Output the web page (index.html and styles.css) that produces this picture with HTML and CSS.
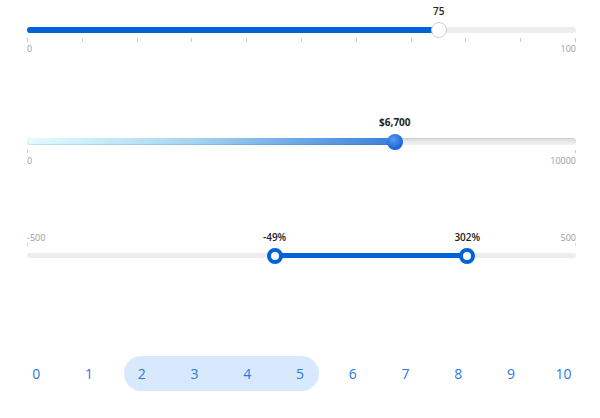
FILE: index.html
```html
<!DOCTYPE html>
<html lang="en">
<head>
    <meta charset="UTF-8">
    <meta name="viewport" content="width=device-width, initial-scale=1.0">
    <title>Sliders</title>
    <link rel="stylesheet" href="styles.css">
</head>
<body>
    <!-- Basic slider with ticks -->
    <div class="slider slider-basic">
        <div class="rail">
            <div class="fill" style="width: 75%"></div>
            <span class="bubble" style="left: 75%">75</span>
            <div class="thumb" style="left: 75%"></div>
        </div>
        <div class="ticks">
            <i></i><i></i><i></i><i></i><i></i><i></i><i></i><i></i><i></i><i></i><i></i>
        </div>
        <div class="tick-labels">
            <span>0</span>
            <span>100</span>
        </div>
    </div>

    <!-- Gradient slider -->
    <div class="slider slider-gradient">
        <div class="rail">
            <div class="fill" style="width: 67%"></div>
            <span class="bubble" style="left: 67%">$6,700</span>
            <div class="thumb" style="left: 67%"></div>
        </div>
        <div class="ticks">
            <i></i><i></i>
        </div>
        <div class="tick-labels">
            <span>0</span>
            <span>10000</span>
        </div>
    </div>

    <!-- Range slider -->
    <div class="slider slider-range">
        <div class="tick-labels">
            <span>-500</span>
            <span>500</span>
        </div>
        <div class="ticks">
            <i></i><i></i>
        </div>
        <div class="rail">
            <div class="fill" style="left: 45.1%; width: 35.1%"></div>
            <span class="bubble" style="left: 45.1%">-49%</span>
            <span class="bubble" style="left: 80.2%">302%</span>
            <div class="thumb" style="left: 45.1%"></div>
            <div class="thumb" style="left: 80.2%"></div>
        </div>
    </div>

    <!-- Step range picker -->
    <div class="steps">
        <div class="steps-track">
            <div class="steps-selected"></div>
        </div>
        <div class="steps-labels">
            <span>0</span>
            <span>1</span>
            <span>2</span>
            <span>3</span>
            <span>4</span>
            <span>5</span>
            <span>6</span>
            <span>7</span>
            <span>8</span>
            <span>9</span>
            <span>10</span>
        </div>
    </div>
</body>
</html>
```

FILE: styles.css
```css
body {
  margin: 0;
  font-family: "Open Sans", "Noto Sans", sans-serif;
  background-color: white;
}

/* Shared slider styles */
.slider {
  margin: 0 24px 0 27px;
}

.rail {
  position: relative;
  height: 6px;
  border-radius: 3px;
  background-color: #ededed;
}

.fill {
  position: absolute;
  top: 0;
  left: 0;
  height: 100%;
  border-radius: 3px;
  background-color: #0062d8;
}

.thumb {
  position: absolute;
  top: 50%;
  width: 16px;
  height: 16px;
  border-radius: 50%;
  transform: translate(-50%, -50%);
  box-sizing: border-box;
}

.bubble {
  position: absolute;
  top: -22px;
  transform: translateX(-50%);
  font-size: 10px;
  line-height: 12px;
  color: #222;
  white-space: nowrap;
}

.ticks {
  display: flex;
  justify-content: space-between;
  height: 4px;
}

.ticks i {
  width: 1px;
  height: 100%;
  background-color: #cccccc;
}

.tick-labels {
  display: flex;
  justify-content: space-between;
  font-size: 9px;
  line-height: 11px;
  color: #9a9a9a;
}

/* Slider 1 */
.slider-basic .rail {
  margin-top: 27px;
}

.slider-basic .bubble {
  font-weight: 600;
}

.slider-basic .ticks {
  margin-top: 5px;
}

.slider-basic .tick-labels {
  margin-top: 1px;
}

.slider-basic .thumb {
  background-color: white;
  border: 1px solid #cfcfcf;
}

/* Slider 2 */
.slider-gradient .rail {
  margin-top: 84px;
  height: 7px;
  border-radius: 4px;
  background: linear-gradient(#dcdcdc, #f3f3f3);
  box-shadow: inset 0 1px 1px rgba(0, 0, 0, 0.08);
}

.slider-gradient .fill {
  border-radius: 4px;
  background: linear-gradient(to right, #e4fcff, #a6d5f2 45%, #3b80d8);
  box-shadow: inset 0 -1px 1px rgba(0, 60, 140, 0.15);
}

.slider-gradient .bubble {
  top: -22px;
  font-weight: 700;
}

.slider-gradient .thumb {
  background: radial-gradient(circle at 40% 35%, #5a9cf0, #1763d8 70%, #0b52c0);
}

.slider-gradient .ticks {
  margin-top: 5px;
  height: 3px;
}

.slider-gradient .tick-labels {
  margin-top: 2px;
}

/* Slider 3 */
.slider-range .tick-labels {
  margin-top: 66px;
}

.slider-range .ticks {
  height: 3px;
}

.slider-range .ticks i {
  background-color: #dcdcdc;
}

.slider-range .rail {
  margin-top: 7px;
  height: 5px;
}

.slider-range .bubble {
  top: -22px;
  font-weight: 600;
}

.slider-range .thumb {
  background-color: white;
  border: 4px solid #0062d8;
}

/* Step picker */
.steps {
  display: grid;
  margin: 98px 10px 0 10px;
  height: 35px;
}

.steps-track,
.steps-labels {
  grid-area: 1 / 1;
  display: grid;
  grid-template-columns: repeat(11, 1fr);
}

.steps-selected {
  grid-column: 3 / 7;
  margin: 0 7px 0 9px;
  border-radius: 18px;
  background-color: #d8e9fd;
}

.steps-labels span {
  display: flex;
  align-items: center;
  justify-content: center;
  font-size: 14px;
  color: #2b78e4;
}
```
